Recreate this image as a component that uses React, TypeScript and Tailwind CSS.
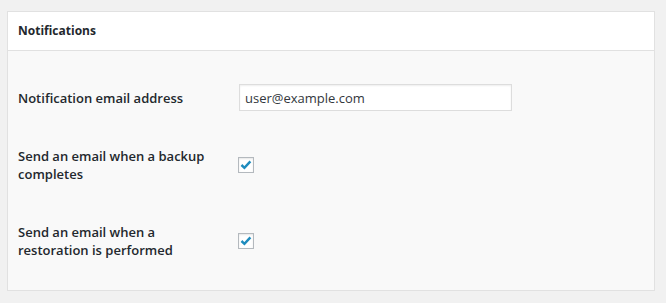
function Check() {
  return (
    <span className="flex h-4 w-4 items-center justify-center border border-[#b4b9be] bg-white shadow-[inset_0_1px_2px_rgba(0,0,0,0.1)]">
      <svg viewBox="0 0 16 16" className="h-[16px] w-[16px]">
        <path d="M2.8 8 L6.2 11.2 L13 3.8" fill="none" stroke="#1e8cbe" strokeWidth="2.8" strokeLinejoin="miter" />
      </svg>
    </span>
  );
}

function Row({ label, children, className }: { label: string; children: React.ReactNode; className: string }) {
  return (
    <div className={`flex items-center ${className}`}>
      <div className="w-[220px] pr-[30px] text-[13px] leading-[18px] font-semibold text-[#23282d]">{label}</div>
      <div className="flex items-center">{children}</div>
    </div>
  );
}

export default function App() {
  return (
    <div className="min-h-screen bg-[#f1f1f1] pl-[7px] pr-[11px] pt-[11px] pb-[13px]" style={{ fontFamily: '"Open Sans", sans-serif' }}>
      <div className="w-[648px] border border-[#e1e1e1] bg-[#f9f9f9]">
        <div className="flex h-[39px] items-center border-b border-[#e1e1e1] bg-white px-[10px]">
          <h2 className="text-[12px] font-bold text-[#23282d]">Notifications</h2>
        </div>
        <div className="px-[10px] pt-[33px] pb-[31px]">
          <Row label="Notification email address" className="h-[27px]">
            <input
              readOnly
              value="user@example.com"
              className="ml-[1px] h-[27px] w-[273px] border border-[#dddddd] bg-white px-[5px] text-[13px] text-[#32373c] shadow-[inset_0_1px_2px_rgba(0,0,0,0.07)] outline-none"
            />
          </Row>
          <Row label="Send an email when a backup completes" className="mt-[36px] h-[36px]">
            <Check />
          </Row>
          <Row label="Send an email when a restoration is performed" className="mt-[40px] h-[36px]">
            <Check />
          </Row>
        </div>
      </div>
    </div>
  );
}
